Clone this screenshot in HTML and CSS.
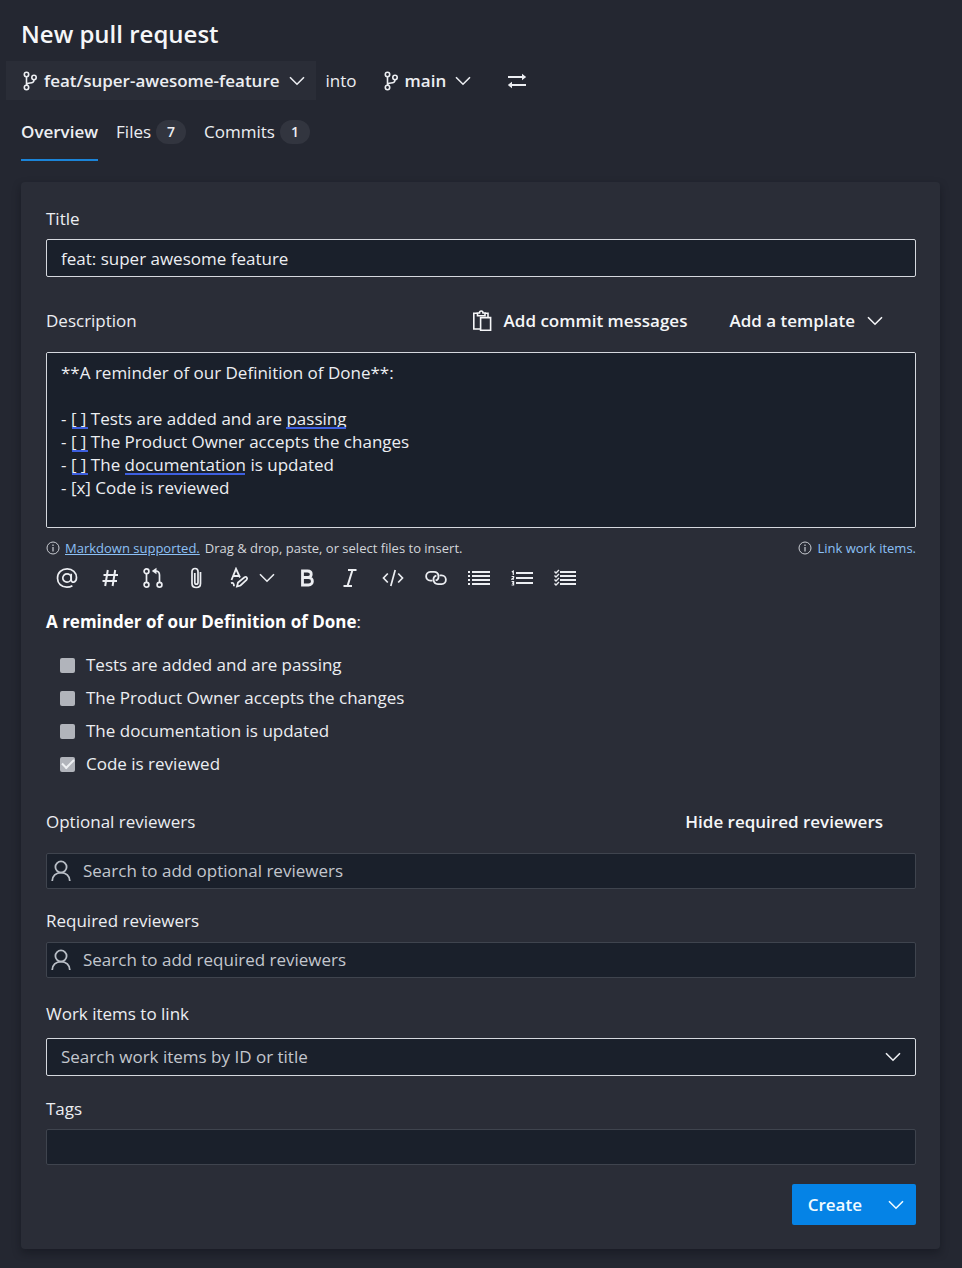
FILE: index.html
```html
<!DOCTYPE html>
<html lang="en">
<head>
<meta charset="utf-8">
<meta name="viewport" content="width=device-width, initial-scale=1">
<title>New pull request</title>
<link rel="stylesheet" href="styles.css">
</head>
<body>
<svg class="sprite" aria-hidden="true">
  <symbol id="branch" viewBox="0 0 16 20"><g fill="none" stroke="currentColor" stroke-width="1.6"><circle cx="4.5" cy="3.5" r="2.2"/><circle cx="4.5" cy="16.5" r="2.2"/><circle cx="12" cy="6.5" r="2.2"/><path d="M4.5 5.7v8.6M12 8.7c0 3-2 3.3-4 3.3-2 0-3.5.5-3.5 2.3"/></g></symbol>
  <symbol id="chevron" viewBox="0 0 16 10"><path d="M1 1.2l7 7 7-7" fill="none" stroke="currentColor" stroke-width="1.6"/></symbol>
  <symbol id="info" viewBox="0 0 14 14"><circle cx="7" cy="7" r="6" fill="none" stroke="currentColor"/><path d="M7 6v4.5M7 3.6v1.3" stroke="currentColor" stroke-width="1.2"/></symbol>
  <symbol id="person" viewBox="0 0 20 22"><g fill="none" stroke="currentColor" stroke-width="1.800"><circle cx="10" cy="7" r="5.6"/><path d="M1.2 21c0-5 3.8-8.400 8.800-8.400s8.800 3.400 8.800 8.400"/></g></symbol>
</svg>
<header class="page-header">
  <h1 class="page-title">New pull request</h1>
  <div class="branches">
    <button class="branch-button source" type="button"><svg class="icon-branch"><use href="#branch"/></svg><span>feat/super-awesome-feature</span><svg class="icon-chevron"><use href="#chevron"/></svg></button>
    <span class="into">into</span>
    <button class="branch-button target" type="button"><svg class="icon-branch"><use href="#branch"/></svg><span>main</span><svg class="icon-chevron"><use href="#chevron"/></svg></button>
    <button class="swap" type="button" aria-label="Swap branches"><svg class="icon-swap" viewBox="0 0 20 16"><path d="M1 4h16M3 12h16" stroke="currentColor" stroke-width="1.9"/><path d="M15 .8L19.200 4 15 7.200zM5 8.800L.8 12 5 15.200z" fill="currentColor"/></svg></button>
  </div>
  <nav class="tabs">
    <a class="tab active" href="#overview">Overview</a>
    <a class="tab" href="#files">Files <span class="count">7</span></a>
    <a class="tab" href="#commits">Commits <span class="count">1</span></a>
  </nav>
</header>
<main>
  <form class="card" id="overview">
    <label class="label" for="title">Title</label>
    <input class="field strong" id="title" type="text" value="feat: super awesome feature">

    <div class="row description-row">
      <label class="label" for="description">Description</label>
      <div class="row-actions">
        <button class="text-button" type="button"><svg class="icon-paste" viewBox="0 0 20 22"><g fill="none" stroke="currentColor" stroke-width="1.6"><path d="M8 19H1.800V3.200H5M13 3.200h3V7"/><path d="M5.500 5.800V3h2c0-2.700 3.500-2.700 3.500 0h2v2.800z"/><path d="M8.600 7.600h10v12.600h-10z"/></g></svg>Add commit messages</button>
        <button class="text-button" type="button">Add a template<svg class="icon-chevron"><use href="#chevron"/></svg></button>
      </div>
    </div>
    <div class="editor">
      <textarea class="textarea" id="description" spellcheck="false">**A reminder of our Definition of Done**:

- [ ] Tests are added and are passing
- [ ] The Product Owner accepts the changes
- [ ] The documentation is updated
- [x] Code is reviewed
</textarea>
      <svg class="proofing" aria-hidden="true"><path d="M26 76h16M240 76h60M26 99h16M26 122h16M79 122h120"/></svg>
    </div>
    <div class="row hints">
      <span class="hint"><svg class="icon-info"><use href="#info"/></svg><a class="link underlined" href="#markdown">Markdown supported.</a><span>Drag &amp; drop, paste, or select files to insert.</span></span>
      <span class="hint"><svg class="icon-info"><use href="#info"/></svg><a class="link" href="#items">Link work items.</a></span>
    </div>
    <div class="toolbar" role="toolbar" aria-label="Formatting">
      <button class="tool" type="button" aria-label="Mention"><svg viewBox="0 0 22 22"><g fill="none" stroke="currentColor" stroke-width="1.700"><circle cx="11" cy="11" r="4.200"/><path d="M15.200 6.800v6c0 3.600 5.300 3.200 5.300-2.300 0-5-4-8.700-9.300-8.700-5.500 0-9.700 4-9.700 9.400 0 5.300 4 9 9.300 9 2.200 0 4-.5 5.600-1.400"/></g></svg></button>
      <button class="tool" type="button" aria-label="Work item"><svg viewBox="0 0 22 22"><path d="M8.800 3L6.200 19M16.200 3l-2.600 16M4.500 8h14.500M3.500 14H18" fill="none" stroke="currentColor" stroke-width="2"/></svg></button>
      <button class="tool" type="button" aria-label="Pull request"><svg viewBox="0 0 22 22"><g fill="none" stroke="currentColor" stroke-width="1.700"><circle cx="4.500" cy="4.200" r="2.400"/><circle cx="4.500" cy="17.800" r="2.400"/><circle cx="17.500" cy="17.800" r="2.400"/><path d="M4.500 6.600v8.800M17.500 15.400V8c0-2.500-1-4-4-4"/></g><path d="M14.500.8v6.400L9.800 4z" fill="currentColor"/></svg></button>
      <button class="tool" type="button" aria-label="Attach"><svg viewBox="0 0 22 22"><path d="M15.500 5v11.500c0 2.200-1.600 4-4.200 4s-4.300-1.800-4.300-4V4.500c0-1.800 1.200-3 3-3s3 1.200 3 3v11c0 1-.6 1.700-1.600 1.700s-1.600-.7-1.600-1.700V6" fill="none" stroke="currentColor" stroke-width="1.700"/></svg></button>
      <button class="tool format" type="button" aria-label="Text format"><svg viewBox="0 0 22 22"><g fill="none" stroke="currentColor" stroke-width="1.800"><path d="M3.500 13L8 1.800l4 8.700M5 9h6.500M3 16.200c2-.8 3 .2 3 3"/><path d="M9 19.500l1-4 6.500-5.300c2-1 3.500 1 2 2.600L12.500 18.500z"/></g></svg><svg class="icon-chevron"><use href="#chevron"/></svg></button>
      <button class="tool" type="button" aria-label="Bold"><svg viewBox="0 0 22 22"><path d="M6.500 4h5c5 0 5 6.500 0 6.500h-5zM6.500 10.500h6c5.200 0 5.200 7.500 0 7.500h-6z" fill="none" stroke="currentColor" stroke-width="2.800"/></svg></button>
      <button class="tool" type="button" aria-label="Italic"><svg viewBox="0 0 22 22"><path d="M9 3h8.500M4.500 19H13M13.500 3L8.500 19" fill="none" stroke="currentColor" stroke-width="2"/></svg></button>
      <button class="tool" type="button" aria-label="Code"><svg viewBox="0 0 22 22"><path d="M5.800 6.500L1.500 11l4.300 4.500M16.200 6.500l4.300 4.500-4.300 4.500M13.200 3L8.800 19" fill="none" stroke="currentColor" stroke-width="1.700"/></svg></button>
      <button class="tool" type="button" aria-label="Link"><svg viewBox="0 0 22 22"><g fill="none" stroke="currentColor" stroke-width="1.800"><path d="M7.500 13.600H5.400C-.3 13.600-.3 4.900 5.400 4.900h3.700c5.300 0 5.800 7.500 1.500 8.500"/><path d="M14.500 8.400h2.100c5.700 0 5.700 8.700 0 8.700h-3.700c-5.300 0-5.800-7.500-1.500-8.500"/></g></svg></button>
      <button class="tool" type="button" aria-label="Bulleted list"><svg viewBox="0 0 22 22"><path d="M4 5h18M4 9h18M4 13h18M4 17h18M0 5h2M0 9h2M0 13h2M0 17h2" stroke="currentColor" stroke-width="2"/></svg></button>
      <button class="tool" type="button" aria-label="Numbered list"><svg viewBox="0 0 22 22"><path d="M5 6h17M5 11h17M5 16h17" stroke="currentColor" stroke-width="2"/><path d="M.8 5L2.300 4v4M.6 9.500h2v1.300l-2 1.400h2.400M.6 14.500h2v3.500h-2M1 16.200h1.600" fill="none" stroke="currentColor" stroke-width="1.200"/></svg></button>
      <button class="tool" type="button" aria-label="Task list"><svg viewBox="0 0 22 22"><path d="M6 5h16M6 9h16M6 13h16M6 17h16" stroke="currentColor" stroke-width="2"/><path d="M.5 4.500l1.500 1.500 3-3M.5 8.500l1.500 1.500 3-3M.5 12.500L2 14l3-3M.5 16.500L2 18l3-3" fill="none" stroke="currentColor" stroke-width="1.400"/></svg></button>
    </div>

    <section class="preview">
      <p class="preview-title"><strong>A reminder of our Definition of Done</strong>:</p>
      <ul class="tasks">
        <li><label class="task"><input class="check" type="checkbox" disabled>Tests are added and are passing</label></li>
        <li><label class="task"><input class="check" type="checkbox" disabled>The Product Owner accepts the changes</label></li>
        <li><label class="task"><input class="check" type="checkbox" disabled>The documentation is updated</label></li>
        <li><label class="task"><input class="check" type="checkbox" disabled checked>Code is reviewed</label></li>
      </ul>
    </section>

    <div class="row optional-row">
      <label class="label" for="optional">Optional reviewers</label>
      <button class="text-button" type="button">Hide required reviewers</button>
    </div>
    <div class="field combo person"><svg class="icon-person"><use href="#person"/></svg><input class="combo-input" id="optional" type="text" placeholder="Search to add optional reviewers"></div>

    <label class="label required-label" for="required">Required reviewers</label>
    <div class="field combo person"><svg class="icon-person"><use href="#person"/></svg><input class="combo-input" id="required" type="text" placeholder="Search to add required reviewers"></div>

    <label class="label items-label" for="items">Work items to link</label>
    <div class="field strong combo items"><input class="combo-input" id="items" type="text" placeholder="Search work items by ID or title"><button class="combo-toggle" type="button" aria-label="Show work items"><svg class="icon-chevron"><use href="#chevron"/></svg></button></div>

    <label class="label tags-label" for="tags">Tags</label>
    <input class="field" id="tags" type="text">

    <div class="actions">
      <button class="create" type="submit">Create</button><button class="create-more" type="button" aria-label="More create options"><svg class="icon-chevron"><use href="#chevron"/></svg></button>
    </div>
  </form>
</main>
</body>
</html>
```
FILE: styles.css
```css
* { box-sizing: border-box; }

body {
  margin: 0;
  padding: 16px 22px 18px 21px;
  background: #242731;
  color: #eceef2;
  font: 17px/24px "Open Sans", "Noto Sans", sans-serif;
}

button, input, textarea { font: inherit; color: inherit; }
button { display: inline-flex; align-items: center; padding: 0; border: 0; background: none; cursor: pointer; }
svg { display: block; flex: none; }
.sprite { position: absolute; width: 0; height: 0; }

.icon-branch { width: 16px; height: 20px; }
.icon-chevron { width: 16px; height: 10px; }
.icon-swap { width: 20px; height: 16px; }
.icon-info { width: 14px; height: 14px; color: #c9ccd2; }
.icon-person { width: 20px; height: 22px; color: #b9bec6; }
.icon-paste { width: 20px; height: 22px; }

.page-title { margin: 0; font-size: 24px; line-height: 36px; font-weight: 600; color: #f5f6f8; }

.branches { display: flex; align-items: center; margin: 9px 0 0 -15px; }
.branch-button { height: 39px; gap: 6px; font-weight: 600; }
.branch-button .icon-chevron { margin-left: 3px; }
.source { padding: 0 11px 0 16px; background: #2a2d37; }
.into { margin: 0 26px 0 10px; }
.swap { margin-left: 36px; }

.tabs { display: flex; gap: 18px; margin-top: 12px; }
.tab { display: flex; align-items: center; gap: 5px; height: 49px; padding-bottom: 10px; color: inherit; text-decoration: none; }
.tab.active { border-bottom: 2px solid #1b84d8; padding-bottom: 8px; font-weight: 600; }
.count { width: 30px; border-radius: 12px; background: #32353f; font-size: 14px; font-weight: 600; text-align: center; }

.card {
  display: flex;
  flex-direction: column;
  margin-top: 21px;
  padding: 25px 24px 24px 25px;
  border-radius: 4px;
  background: #2a2d37;
  box-shadow: 0 4px 8px rgba(10, 12, 20, 0.4);
}

.label { display: block; }
.row { display: flex; align-items: center; justify-content: space-between; }
.row-actions { display: flex; gap: 42px; }
.text-button { gap: 12px; font-weight: 600; color: #f5f6f8; }

.field { width: 100%; height: 36px; border: 1px solid #3f444e; border-radius: 2px; background: #1a202b; outline: 0; }
.field.strong { height: 38px; padding: 0 14px; border-color: #d5d8de; }
#title { margin-top: 8px; }
#tags { padding: 0 14px; margin-top: 8px; }

.description-row { margin-top: 32px; padding-right: 33px; }
.editor { position: relative; margin-top: 19px; }
.textarea {
  display: block;
  width: 100%;
  height: 176px;
  padding: 8px 14px;
  border: 1px solid #d5d8de;
  border-radius: 2px;
  background: #1a202b;
  line-height: 23px;
  resize: none;
  outline: 0;
}
.proofing { position: absolute; inset: 0; width: 100%; height: 100%; pointer-events: none; fill: none; stroke: #3d5fe0; stroke-width: 2; }

.hints { margin-top: 10px; font-size: 13px; line-height: 20px; color: #d3d6db; }
.hint { display: flex; align-items: center; gap: 5px; }
.link { color: #8cc0f5; text-decoration: none; }
.link.underlined { text-decoration: underline; }

.toolbar { display: flex; gap: 21px; margin: 9px 0 0 10px; }
.tool svg { width: 22px; height: 22px; }
.tool .icon-chevron { width: 16px; height: 10px; }
.format { gap: 9px; }

.preview-title { margin: 21px 0 0; }
.preview-title strong { font-weight: 700; color: #fff; }
.tasks { display: grid; gap: 9px; margin: 19px 0 0; padding: 0 0 0 14px; list-style: none; }
.task { display: flex; align-items: center; gap: 11px; }
.check { appearance: none; display: grid; place-items: center; width: 15px; height: 15px; margin: 0; border-radius: 2px; background: #b1b4bb; }
.check:checked::before { content: ""; width: 10px; height: 5px; margin-bottom: 3px; border: solid #eef0f3; border-width: 0 0 2px 2px; rotate: -45deg; }

.optional-row { margin-top: 34px; padding-right: 33px; }
.combo { display: flex; align-items: center; }
.combo-input { flex: 1; min-width: 0; padding: 0; border: 0; background: none; outline: 0; }
.combo-input::placeholder { color: #c3c7ce; opacity: 1; }
.person { gap: 12px; padding: 0 4px; }
.optional-row + .person { margin-top: 19px; }
.required-label { margin-top: 20px; }
.required-label + .person { margin-top: 9px; }
.items-label { margin-top: 24px; }
.items { margin-top: 12px; }
.tags-label { margin-top: 21px; }

.actions { display: flex; justify-content: flex-end; margin-top: 19px; }
.create, .create-more { height: 41px; background: #0583e6; color: #f0fbff; font-weight: 600; }
.create { padding: 0 14px 0 16px; border-radius: 2px 0 0 2px; }
.create-more { padding: 0 12px; border-radius: 0 2px 2px 0; }
```
